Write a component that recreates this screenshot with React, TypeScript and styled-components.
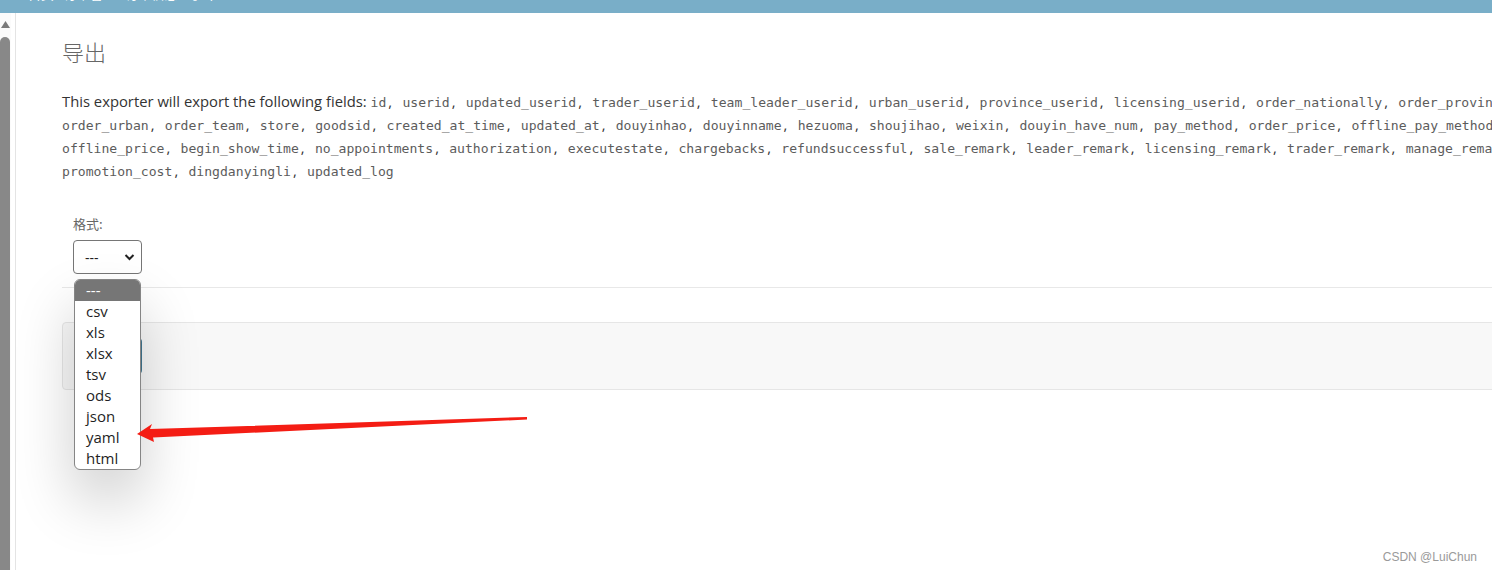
import React from "react";
import styled, { createGlobalStyle } from "styled-components";

const GlobalStyle = createGlobalStyle`
  html, body { margin: 0; padding: 0; background: #fff; overflow: hidden; }
  body { font-family: "Open Sans", "Noto Sans CJK SC", sans-serif; color: #333; }
`;

const fields = [
  "id", "userid", "updated_userid", "trader_userid", "team_leader_userid", "urban_userid",
  "province_userid", "licensing_userid", "order_nationally", "order_province", "order_urban",
  "order_team", "store", "goodsid", "created_at_time", "updated_at", "douyinhao", "douyinname",
  "hezuoma", "shoujihao", "weixin", "douyin_have_num", "pay_method", "order_price",
  "offline_pay_method", "offline_price", "begin_show_time", "no_appointments", "authorization",
  "executestate", "chargebacks", "refundsuccessful", "sale_remark", "leader_remark",
  "licensing_remark", "trader_remark", "manage_remark", "promotion_cost", "dingdanyingli",
  "updated_log",
];

const formats = ["---", "csv", "xls", "xlsx", "tsv", "ods", "json", "yaml", "html"];

const Page = styled.div`
  position: relative;
  width: 1492px;
  height: 570px;
  overflow: hidden;
  display: flex;
  flex-direction: column;
`;

const TopBar = styled.div`
  height: 13px;
  flex-shrink: 0;
  background: #79aec8;
  overflow: hidden;
  display: flex;
  align-items: flex-start;
  padding-left: 28px;
`;

const Crumbs = styled.div`
  margin-top: -14px;
  color: #fff;
  font-size: 13px;
  line-height: 16px;
  white-space: nowrap;
  font-family: "Noto Sans CJK SC", sans-serif;
`;

const Main = styled.div`
  flex: 1;
  display: flex;
  min-height: 0;
`;

const Sidebar = styled.div`
  width: 15px;
  flex-shrink: 0;
  border-right: 1px solid #e4e4e4;
  display: flex;
`;

const Track = styled.div`
  width: 11px;
  background: #fbfbfb;
  display: flex;
  flex-direction: column;
  align-items: stretch;
`;

const ArrowUp = styled.div`
  height: 24px;
  display: flex;
  align-items: flex-start;
  justify-content: center;
  padding-top: 8px;
  box-sizing: border-box;
`;

const Thumb = styled.div`
  flex: 1;
  margin-right: 1px;
  background: #888;
  border-radius: 5px 5px 0 0;
`;

const Content = styled.div`
  flex: none;
  padding-left: 46px;
`;

const Title = styled.h1`
  margin: 25px 0 0;
  font-family: "Noto Sans CJK SC", sans-serif;
  font-size: 22px;
  line-height: 26px;
  font-weight: 300;
  color: #666;
`;

const Intro = styled.p`
  margin: 26px 0 0;
  width: 1513px;
  font-size: 14.8px;
  line-height: 23px;
  color: #333;
`;

const Code = styled.code`
  font-family: "DejaVu Sans Mono", monospace;
  font-size: 13.1px;
  line-height: 14px;
  color: #5c5c5c;
  margin-right: 2px;
`;

const Sep = styled.span`
  margin-right: 6.4px;
`;

const Fieldset = styled.div`
  margin-top: 33px;
  padding: 0 11px 13px;
  border-bottom: 1px solid #e8e8e8;
`;

const Label = styled.label`
  display: block;
  font-size: 13px;
  line-height: 18px;
  color: #666;
  margin-bottom: 7px;
  font-family: "Noto Sans CJK SC", sans-serif;
`;

const SelectWrap = styled.div`
  position: relative;
  width: 69px;
`;

const SelectBox = styled.div`
  box-sizing: border-box;
  height: 34px;
  border: 1px solid #767676;
  border-radius: 4px;
  display: flex;
  align-items: center;
  justify-content: space-between;
  padding: 0 6px 0 11px;
  font-size: 14px;
  color: #222;
  background: #fff;
`;

const Listbox = styled.ul`
  position: absolute;
  top: 39px;
  left: 1px;
  width: 67px;
  box-sizing: border-box;
  margin: 0;
  padding: 0;
  list-style: none;
  background: #fff;
  border: 1px solid #858585;
  border-radius: 6px;
  overflow: hidden;
  box-shadow: 0 30px 60px rgba(0, 0, 0, 0.2);
  z-index: 5;
`;

const Option = styled.li<{ $selected?: boolean }>`
  height: 21px;
  line-height: 21px;
  padding-left: 11px;
  font-size: 15px;
  color: ${(p) => (p.$selected ? "#fff" : "#1f1f1f")};
  background: ${(p) => (p.$selected ? "#767676" : "transparent")};
`;

const SubmitRow = styled.div`
  margin-top: 34px;
  padding: 15px 12px;
  background: #f8f8f8;
  border: 1px solid #e6e6e6;
  border-radius: 4px;
  display: flex;
`;

const SubmitButton = styled.button`
  width: 67px;
  height: 36px;
  border: none;
  border-radius: 4px;
  background: #417690;
  color: #fff;
  font-size: 13px;
  font-family: "Noto Sans CJK SC", sans-serif;
`;

const Annotation = styled.svg`
  position: absolute;
  left: 0;
  top: 0;
  pointer-events: none;
  z-index: 10;
`;

const Watermark = styled.div`
  position: absolute;
  right: 15px;
  bottom: 6px;
  font-family: "Liberation Sans", Arial, sans-serif;
  font-size: 12px;
  color: #9a9a9a;
  z-index: 10;
`;

export default function App() {
  return (
    <>
      <GlobalStyle />
      <Page>
        <TopBar>
          <Crumbs>首页 › 订单管理 › 订单信息 › 导出</Crumbs>
        </TopBar>
        <Main>
          <Sidebar>
            <Track>
              <ArrowUp>
                <svg width="9" height="7" viewBox="0 0 9 7">
                  <polygon points="4.5,0 9,7 0,7" fill="#7a7a7a" />
                </svg>
              </ArrowUp>
              <Thumb />
            </Track>
          </Sidebar>
          <Content>
            <Title>导出</Title>
            <Intro>
              This exporter will export the following fields:{" "}
              {fields.map((f, i) => (
                <React.Fragment key={f}>
                  <Code>{f}</Code>
                  {i < fields.length - 1 && <Sep>, </Sep>}
                </React.Fragment>
              ))}
            </Intro>
            <Fieldset>
              <Label>格式:</Label>
              <SelectWrap>
                <SelectBox>
                  <span>---</span>
                  <svg width="11" height="8" viewBox="0 0 11 8">
                    <polyline points="1.5,2 5.5,6 9.5,2" fill="none" stroke="#222" strokeWidth="2" />
                  </svg>
                </SelectBox>
                <Listbox>
                  {formats.map((f, i) => (
                    <Option key={f} $selected={i === 0}>{f}</Option>
                  ))}
                </Listbox>
              </SelectWrap>
            </Fieldset>
            <SubmitRow>
              <SubmitButton>提交</SubmitButton>
            </SubmitRow>
          </Content>
        </Main>
        <Annotation width="1492" height="570" viewBox="0 0 1492 570">
          <polygon
            points="137,434 152,424 150,429 527,417 527,419.5 153,437.5 154,442"
            fill="#f41d14"
          />
        </Annotation>
        <Watermark>CSDN @LuiChun</Watermark>
      </Page>
    </>
  );
}
